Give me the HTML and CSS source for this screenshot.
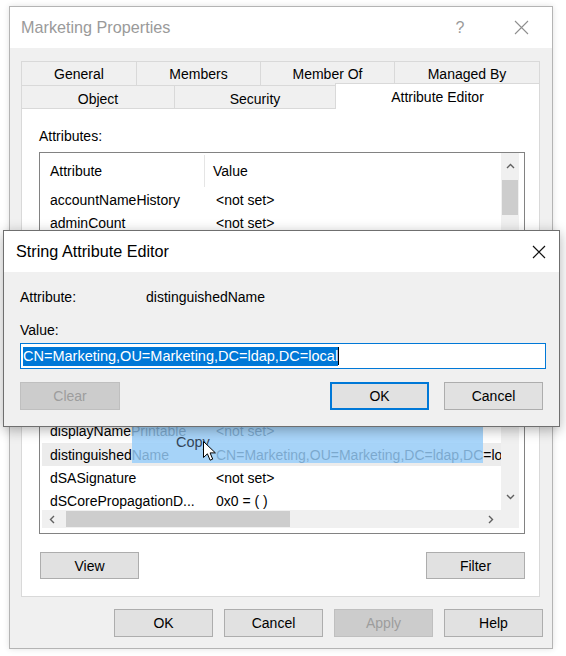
FILE: index.html
```html
<!DOCTYPE html>
<html>
<head>
<meta charset="utf-8">
<title>Marketing Properties</title>
<link rel="stylesheet" href="styles.css">
</head>
<body>
<div class="window">
  <div class="titlebar">
    <span class="title">Marketing Properties</span>
    <span class="help">?</span>
    <span class="close"><svg width="15" height="15" viewBox="0 0 15 15"><path d="M1 1L14 14M14 1L1 14" stroke="#8f8f8f" stroke-width="1.1" fill="none"/></svg></span>
  </div>
  <div class="body">
    <div class="tabs">
      <div class="tabrow row1">
        <div class="tab">General</div>
        <div class="tab">Members</div>
        <div class="tab">Member Of</div>
        <div class="tab">Managed By</div>
      </div>
      <div class="tabrow row2">
        <div class="tab">Object</div>
        <div class="tab">Security</div>
        <div class="tab active">Attribute Editor</div>
      </div>
    </div>
    <div class="panel">
      <div class="label">Attributes:</div>
      <div class="listbox">
        <div class="lv">
          <div class="lvhead"><span class="c1">Attribute</span><span class="c2">Value</span></div>
          <div class="row"><span class="c1">accountNameHistory</span><span class="c2">&lt;not set&gt;</span></div>
          <div class="row"><span class="c1">adminCount</span><span class="c2">&lt;not set&gt;</span></div>
          <div class="row"><span class="c1">adminDescription</span><span class="c2">&lt;not set&gt;</span></div>
          <div class="row"><span class="c1">adminDisplayName</span><span class="c2">&lt;not set&gt;</span></div>
          <div class="row"><span class="c1">altSecurityIdentities</span><span class="c2">&lt;not set&gt;</span></div>
          <div class="row"><span class="c1">cn</span><span class="c2">Marketing</span></div>
          <div class="row"><span class="c1">controlAccessRights</span><span class="c2">&lt;not set&gt;</span></div>
          <div class="row"><span class="c1">description</span><span class="c2">&lt;not set&gt;</span></div>
          <div class="row"><span class="c1">desktopProfile</span><span class="c2">&lt;not set&gt;</span></div>
          <div class="row"><span class="c1">displayName</span><span class="c2">&lt;not set&gt;</span></div>
          <div class="row"><span class="c1">displayNamePrintable</span><span class="c2">&lt;not set&gt;</span></div>
          <div class="row sel"><span class="c1">distinguishedName</span><span class="c2">CN=Marketing,OU=Marketing,DC=ldap,DC=local</span></div>
          <div class="row"><span class="c1">dSASignature</span><span class="c2">&lt;not set&gt;</span></div>
          <div class="row"><span class="c1">dSCorePropagationD...</span><span class="c2">0x0 = ( )</span></div>
        </div>
        <div class="vscroll">
          <div class="arrow"><svg width="9" height="6" viewBox="0 0 9 6"><path d="M1 5L4.5 1.5L8 5" stroke="#606060" stroke-width="1.4" fill="none"/></svg></div>
          <div class="vthumb"></div>
          <div class="spacer"></div>
          <div class="arrow"><svg width="9" height="6" viewBox="0 0 9 6"><path d="M1 1L4.5 4.5L8 1" stroke="#606060" stroke-width="1.4" fill="none"/></svg></div>
        </div>
        <div class="hscroll">
          <div class="harrow"><svg width="6" height="9" viewBox="0 0 6 9"><path d="M5 1L1.5 4.5L5 8" stroke="#606060" stroke-width="1.4" fill="none"/></svg></div>
          <div class="hthumb"></div>
          <div class="spacer"></div>
          <div class="harrow"><svg width="6" height="9" viewBox="0 0 6 9"><path d="M1 1L4.5 4.5L1 8" stroke="#606060" stroke-width="1.4" fill="none"/></svg></div>
        </div>
        <div class="corner"></div>
      </div>
      <div class="panelbtns">
        <button class="btn">View</button>
        <button class="btn">Filter</button>
      </div>
    </div>
    <div class="footer">
      <button class="btn tall">OK</button>
      <button class="btn tall">Cancel</button>
      <button class="btn tall disabled">Apply</button>
      <button class="btn tall">Help</button>
    </div>
  </div>
</div>

<div class="dialog">
  <div class="dtitle">
    <span>String Attribute Editor</span>
    <span class="dclose"><svg width="14" height="14" viewBox="0 0 14 14"><path d="M1 1L13 13M13 1L1 13" stroke="#111" stroke-width="1.2" fill="none"/></svg></span>
  </div>
  <div class="dbody">
    <div class="drow"><span class="dlab">Attribute:</span><span>distinguishedName</span></div>
    <div class="drow vlab">Value:</div>
    <div class="dinput"><span class="selected">CN=Marketing,OU=Marketing,DC=ldap,DC=local</span><span class="caret"></span></div>
    <div class="dbtns">
      <button class="btn tall disabled clear">Clear</button>
      <button class="btn tall focus">OK</button>
      <button class="btn tall">Cancel</button>
    </div>
  </div>
</div>

<div class="ghost"><span class="copy">Copy</span></div>
<svg class="cursor" width="14" height="22" viewBox="0 0 14 22"><path d="M0.5 0.5L0.5 16.5L4.4 12.8L7.1 19.2L9.7 18.1L7.1 11.9L12.4 11.9Z" fill="#fff" stroke="#000" stroke-width="1" stroke-linejoin="round"/></svg>
</body>
</html>
```

FILE: styles.css
```css
* { box-sizing: border-box; }
html, body { margin: 0; padding: 0; }
body {
  width: 566px;
  height: 656px;
  background: #fff;
  font-family: "Liberation Sans", Arial, sans-serif;
  font-size: 14px;
  color: #000;
  position: relative;
  overflow: hidden;
}

.window {
  margin: 6px 0 0 9px;
  width: 544px;
  height: 643px;
  border: 1px solid #b4b4b4;
  background: #f0f0f0;
  display: flex;
  flex-direction: column;
  box-shadow: 0 0 6px rgba(0,0,0,0.12);
}
.titlebar {
  height: 41px;
  flex: none;
  background: #fff;
  display: flex;
  align-items: center;
  padding-left: 11px;
}
.title { font-size: 16.2px; color: #9a9a9a; }
.help { margin-left: auto; width: 40px; text-align: center; color: #9a9a9a; font-size: 16px; }
.close { width: 46px; margin-left: 18px; margin-right: 8px; display: flex; justify-content: center; }

.body {
  flex: 1;
  padding: 13px 0 0 11px;
  display: flex;
  flex-direction: column;
}
.tabs { width: 519px; }
.tabrow { display: grid; }
.row1 { grid-template-columns: 115px 124px 134px 146px; height: 24px; }
.row2 { grid-template-columns: 153px 161px 205px; height: 23px; }
.tab {
  border-top: 1px solid #d9d9d9;
  border-left: 1px solid #d9d9d9;
  display: flex;
  align-items: center;
  justify-content: center;
  white-space: nowrap;
}
.tab:last-child { border-right: 1px solid #d9d9d9; }
.row2 .tab { padding-top: 2px; }
.row2 .tab.active {
  background: #fff;
  margin-top: -2px;
  height: 26px;
  padding-top: 0;
  position: relative;
  z-index: 1;
}

.panel {
  width: 519px;
  height: 489px;
  flex: none;
  background: #fff;
  border: 1px solid #d9d9d9;
  padding: 18px 0 0 17px;
}
.label { height: 18px; line-height: 18px; }
.listbox {
  margin-top: 7px;
  width: 486px;
  height: 382px;
  border: 1px solid #828282;
  display: grid;
  grid-template-columns: 459px 18px;
  grid-template-rows: 357px 18px;
  padding: 0 5px 5px 2px;
}
.lv { overflow: hidden; background: #fff; }
.lvhead { height: 35px; display: flex; padding-top: 2px; }
.lvhead .c1 {
  width: 163px;
  height: 32px;
  line-height: 32px;
  padding-left: 8px;
  border-right: 1px solid #e5e5e5;
}
.lvhead .c2 { height: 32px; line-height: 32px; padding-left: 8px; }
.row {
  height: 23.2px;
  display: flex;
  align-items: center;
  white-space: nowrap;
}
.row .c1 { width: 166px; flex: none; padding-left: 8px; overflow: hidden; }
.row .c2 { padding-left: 8px; }
.row.sel { background: #ececec; }

.vscroll { grid-column: 2; grid-row: 1; background: #f0f0f0; display: flex; flex-direction: column; }
.arrow { height: 26px; flex: none; display: flex; align-items: center; justify-content: center; }
.vthumb { height: 35px; margin: 1px 1px 0; background: #cdcdcd; flex: none; }
.spacer { flex: 1; }
.hscroll { grid-column: 1; grid-row: 2; background: #f0f0f0; display: flex; }
.harrow { width: 20px; flex: none; display: flex; align-items: center; justify-content: center; }
.hthumb { width: 224px; margin: 1px 0 1px 4px; background: #cdcdcd; flex: none; }
.corner { grid-column: 2; grid-row: 2; background: #f0f0f0; }

.panelbtns {
  margin-top: 18px;
  width: 486px;
  display: flex;
  justify-content: space-between;
  padding-left: 1px;
}
.btn {
  font: inherit;
  width: 99px;
  height: 27px;
  padding: 0;
  background: #e1e1e1;
  border: 1px solid #adadad;
  color: #000;
}
.btn.tall { height: 28px; }
.btn.disabled { background: #cccccc; border-color: #bfbfbf; color: #9d9d9d; }
.btn.focus { border: 2px solid #0078d7; }

.footer {
  display: flex;
  justify-content: flex-end;
  gap: 11px;
  padding: 12px 9px 0 0;
}

.dialog {
  position: absolute;
  left: 3px;
  top: 230px;
  width: 557px;
  height: 197px;
  border: 1px solid #6f6f6f;
  background: #f0f0f0;
  z-index: 10;
  box-shadow: 0 3px 12px rgba(0,0,0,0.3);
}
.dtitle {
  height: 41px;
  background: #fff;
  display: flex;
  align-items: center;
  padding-left: 12px;
  font-size: 16.2px;
}
.dclose { margin-left: auto; width: 40px; display: flex; justify-content: center; }
.dbody { padding: 16px 13px 0 16px; }
.drow { display: flex; line-height: 18px; height: 18px; }
.dlab { width: 126px; }
.vlab { margin-top: 15px; }
.dinput {
  margin-top: 4px;
  width: 526px;
  height: 26px;
  border: 1px solid #0078d7;
  background: #fff;
  display: flex;
  align-items: center;
  padding-left: 2px;
}
.selected {
  background: #0078d7;
  color: #fff;
  font-size: 14.5px;
  line-height: 19px;
}
.caret { width: 1px; height: 18px; background: #000; }
.dbtns { margin-top: 13px; display: flex; padding-right: 3px; gap: 15px; }
.dbtns .clear { width: 100px; margin-right: auto; }

.ghost {
  position: absolute;
  left: 132px;
  top: 424px;
  width: 351px;
  height: 39px;
  background: rgba(150, 205, 250, 0.82);
  z-index: 5;
  padding: 9px 0 0 44px;
  line-height: 18px;
}
.copy { color: #33465a; font-size: 14.5px; }
.cursor { position: absolute; left: 203px; top: 441px; z-index: 6; }
```
